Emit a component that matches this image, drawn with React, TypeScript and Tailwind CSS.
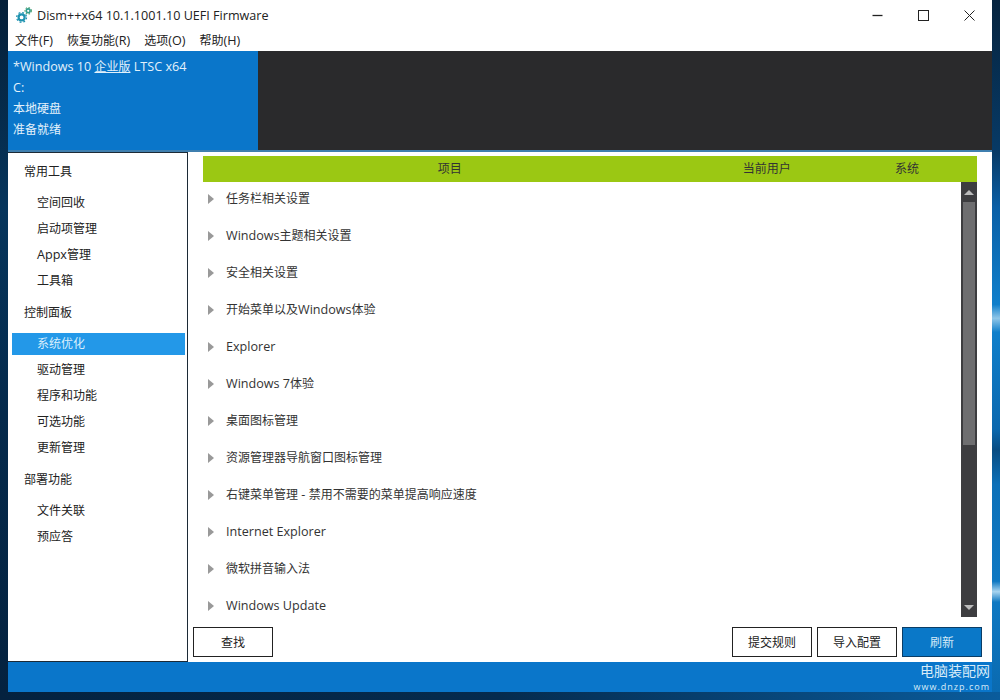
const fontStack = "font-['Open_Sans','Noto_Sans_CJK_SC',sans-serif]";

const sideGroups = [
  { title: "常用工具", items: ["空间回收", "启动项管理", "Appx管理", "工具箱"] },
  { title: "控制面板", items: ["系统优化", "驱动管理", "程序和功能", "可选功能", "更新管理"] },
  { title: "部署功能", items: ["文件关联", "预应答"] },
];

const rows = [
  "任务栏相关设置",
  "Windows主题相关设置",
  "安全相关设置",
  "开始菜单以及Windows体验",
  "Explorer",
  "Windows 7体验",
  "桌面图标管理",
  "资源管理器导航窗口图标管理",
  "右键菜单管理 - 禁用不需要的菜单提高响应速度",
  "Internet Explorer",
  "微软拼音输入法",
  "Windows Update",
];

// han glyphs sit at 12px in the original while latin runs a little wider
function T({ children }: { children: string }) {
  return (
    <>
      {children.split(/([\u4e00-\u9fff]+)/).map((part, i) =>
        i % 2 === 1 ? (
          <span key={i} className="text-[12px]">
            {part}
          </span>
        ) : (
          <span key={i}>{part}</span>
        ),
      )}
    </>
  );
}

function GearLogo() {
  return (
    <svg width="16" height="16" viewBox="0 0 16 16" className="shrink-0">
      <circle cx="5.6" cy="10.4" r="3" fill="none" stroke="#1f93b0" strokeWidth="2.2" />
      <circle cx="5.6" cy="10.4" r="4.9" fill="none" stroke="#1f93b0" strokeWidth="1.3" strokeDasharray="1.9 1.95" />
      <circle cx="12.2" cy="3.8" r="1.9" fill="none" stroke="#2f9e92" strokeWidth="1.6" />
      <circle cx="12.2" cy="3.8" r="3.2" fill="none" stroke="#4f9f6f" strokeWidth="1.1" strokeDasharray="1.5 1.5" />
    </svg>
  );
}

function Button({ label, primary }: { label: string; primary?: boolean }) {
  return (
    <button
      className={
        primary
          ? "w-20 h-[30px] pt-[2px] border border-[#0a3d66] bg-[#0a78c8] text-[#d5e9f7] text-[12px]"
          : "w-20 h-[30px] pt-[2px] border border-[#222] bg-white text-[#222] text-[12px]"
      }
    >
      {label}
    </button>
  );
}

export default function App() {
  return (
    <div className={`${fontStack} w-[1000px] h-[700px] overflow-hidden flex flex-col`}>
      <div className="h-[692px] flex shrink-0">
        <div className="w-2 bg-[linear-gradient(180deg,#051f38_0%,#06355c_30%,#052a4c_60%,#04223f_100%)]" />

        <div className="w-[984px] flex flex-col bg-white text-[12.6px] text-[#222]">
          {/* title bar */}
          <div className="h-[30px] flex items-center shrink-0">
            <div className="ml-2 mr-[5px]">
              <GearLogo />
            </div>
            <span className="pt-[2px]">Dism++x64 10.1.1001.10 UEFI Firmware</span>
            <div className="ml-auto flex items-center">
              <div className="w-[46px] flex justify-center">
                <svg width="11" height="11" viewBox="0 0 11 11">
                  <path d="M0.5 5.5H10.5" stroke="#222" strokeWidth="1.3" />
                </svg>
              </div>
              <div className="w-[46px] flex justify-center">
                <svg width="11" height="11" viewBox="0 0 11 11">
                  <rect x="0.5" y="0.5" width="10" height="10" fill="none" stroke="#222" />
                </svg>
              </div>
              <div className="w-[46px] flex justify-center">
                <svg width="11" height="11" viewBox="0 0 11 11">
                  <path d="M0.5 0.5L10.5 10.5M10.5 0.5L0.5 10.5" stroke="#222" strokeWidth="1" />
                </svg>
              </div>
            </div>
          </div>

          {/* menu */}
          <div className="h-[21px] flex items-center gap-[14px] pl-[7px] pt-[2px] shrink-0">
            <span><T>文件(F)</T></span>
            <span><T>恢复功能(R)</T></span>
            <span><T>选项(O)</T></span>
            <span><T>帮助(H)</T></span>
          </div>

          {/* image info band */}
          <div className="h-[99px] flex shrink-0 bg-[#2a2a2c]">
            <div className="w-[250px] bg-[#0a76ca] text-[#e3f1fb] pl-[5px] pt-[5px] leading-[21px]">
              <div>
                *Windows 10 <span className="underline text-[12px]">企业版</span> LTSC x64
              </div>
              <div>C:</div>
              <div><T>本地硬盘</T></div>
              <div><T>准备就绪</T></div>
            </div>
          </div>
          <div className="h-[2px] bg-[#3f7faf] shrink-0" />

          <div className="flex-1 flex min-h-0">
            {/* sidebar */}
            <div className="w-[180px] shrink-0 border-t border-r border-b border-[#1c2a36] pt-[6px] pl-1 pr-[1px]">
              {sideGroups.map((group) => (
                <div key={group.title} className="mb-[6px]">
                  <div className="h-[26px] flex items-center pl-3 mb-[5px]">
                    <T>{group.title}</T>
                  </div>
                  {group.items.map((item) => (
                    <div key={item} className="h-[26px] flex items-center">
                      <div
                        className={
                          item === "系统优化"
                            ? "w-[173px] h-[22px] flex items-center pl-[25px] bg-[#2398e8] text-[#d9eefc]"
                            : "w-[173px] h-[22px] flex items-center pl-[25px]"
                        }
                      >
                        <span>
                          <T>{item}</T>
                        </span>
                      </div>
                    </div>
                  ))}
                </div>
              ))}
            </div>

            {/* main */}
            <div className="flex-1 min-w-0 flex flex-col pt-1">
              <div className="mx-[15px] h-[26px] shrink-0 flex items-center bg-[#9bc813] text-[#333] text-[12px] text-center">
                <div className="w-[494px]">项目</div>
                <div className="w-[141px]">当前用户</div>
                <div className="w-[140px]">系统</div>
              </div>

              <div className="mx-[15px] h-[435px] shrink-0 flex">
                <div className="flex-1 overflow-hidden">
                  <div className="-mt-[2px]">
                    {rows.map((row) => (
                      <div key={row} className="h-[37px] flex items-center pl-[5px] gap-[12px]">
                        <div className="w-0 h-0 border-y-[5px] border-y-transparent border-l-[6px] border-l-[#999]" />
                        <span className="text-[#333] pt-[2px]">
                          <T>{row}</T>
                        </span>
                      </div>
                    ))}
                  </div>
                </div>
                <div className="w-4 shrink-0 bg-[#3d3d40] flex flex-col items-center">
                  <div className="h-5 flex items-center justify-center">
                    <div className="w-0 h-0 border-x-[5px] border-x-transparent border-b-[5px] border-b-[#bbb]" />
                  </div>
                  <div className="w-3 h-[243px] bg-[#6e6e70]" />
                  <div className="mt-auto h-5 flex items-center justify-center">
                    <div className="w-0 h-0 border-x-[5px] border-x-transparent border-t-[5px] border-t-[#bbb]" />
                  </div>
                </div>
              </div>

              <div className="flex gap-[5px] pl-[5px] pr-[10px] mt-[10px]">
                <Button label="查找" />
                <div className="flex-1" />
                <Button label="提交规则" />
                <Button label="导入配置" />
                <Button label="刷新" primary />
              </div>
            </div>
          </div>

          {/* status bar */}
          <div className="h-[30px] shrink-0 bg-[#0a76ca] flex flex-col items-end pr-[2px] text-[#d8ebf8] leading-none">
            <span className="text-[14px] mt-[2px]">电脑装配网</span>
            <span className="text-[9px] mt-[4px] tracking-[1px]">www.dnzp.com</span>
          </div>
        </div>

        {/* desktop wallpaper showing on the right edge */}
        <div className="w-2 bg-[linear-gradient(180deg,#06243f_0%,#073a66_22%,#0a5fa6_30%,#0f7fcb_44%,#8fc6e8_46%,#0f7fcb_48%,#0b68ae_62%,#084c82_65%,#0c70b8_70%,#0e78c2_84%,#a8d4ef_85.5%,#0e78c2_87%,#0a6ab0_100%)]" />
      </div>

      {/* desktop wallpaper below the window */}
      <div className="h-2 shrink-0 bg-[linear-gradient(90deg,#04223f_0%,#052b4e_50%,#0a5c9c_100%)]" />
    </div>
  );
}
